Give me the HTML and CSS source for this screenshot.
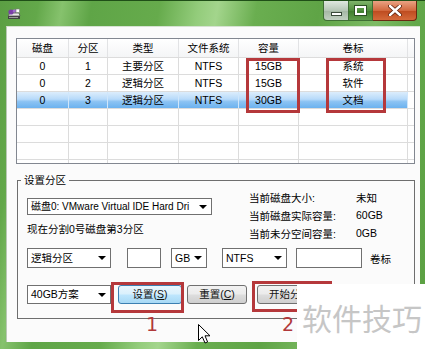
FILE: index.html
```html
<!DOCTYPE html>
<html>
<head>
<meta charset="utf-8">
<link rel="stylesheet" href="styles.css">
</head>
<body>
<div class="window">
  <div class="titlebar">
    <svg class="app-icon" width="14" height="12" viewBox="0 0 14 12">
      <path d="M1 8 L3 5 L12 5 L13 8 Z" fill="#e8e8e8" stroke="#555" stroke-width="0.8"/>
      <rect x="1" y="8" width="12" height="3" fill="#444"/>
      <rect x="2" y="9" width="9" height="1" fill="#9a9a9a"/>
      <circle cx="4" cy="4" r="2.6" fill="#7a3fa8"/>
      <circle cx="7.5" cy="3" r="1.8" fill="#a26ad0"/>
      <rect x="9" y="1" width="3.5" height="3.5" fill="#ffffff" stroke="#777" stroke-width="0.6"/>
    </svg>
    <div class="caption-buttons">
      <div class="cap cap-min"><span class="dash"></span></div>
      <div class="cap cap-max"><span class="square"></span></div>
      <div class="cap cap-close">
        <svg width="14" height="11" viewBox="0 0 14 11"><path d="M2 1 L12 10 M12 1 L2 10" stroke="#5a1e08" stroke-width="4" stroke-linecap="round"/><path d="M2 1 L12 10 M12 1 L2 10" stroke="#ffffff" stroke-width="2.4" stroke-linecap="round"/></svg>
      </div>
    </div>
  </div>

  <div class="client">
    <div class="grid">
      <div class="row head">
        <div class="cell">磁盘</div><div class="cell">分区</div><div class="cell">类型</div><div class="cell">文件系统</div><div class="cell">容量</div><div class="cell">卷标</div><div class="cell"></div>
      </div>
      <div class="row">
        <div class="cell">0</div><div class="cell">1</div><div class="cell">主要分区</div><div class="cell">NTFS</div><div class="cell">15GB</div><div class="cell">系统</div><div class="cell"></div>
      </div>
      <div class="row">
        <div class="cell">0</div><div class="cell">2</div><div class="cell">逻辑分区</div><div class="cell">NTFS</div><div class="cell">15GB</div><div class="cell">软件</div><div class="cell"></div>
      </div>
      <div class="row selected">
        <div class="cell">0</div><div class="cell">3</div><div class="cell">逻辑分区</div><div class="cell">NTFS</div><div class="cell">30GB</div><div class="cell">文档</div><div class="cell"></div>
      </div>
      <div class="row"><div class="cell"></div><div class="cell"></div><div class="cell"></div><div class="cell"></div><div class="cell"></div><div class="cell"></div><div class="cell"></div></div>
      <div class="row"><div class="cell"></div><div class="cell"></div><div class="cell"></div><div class="cell"></div><div class="cell"></div><div class="cell"></div><div class="cell"></div></div>
      <div class="row"><div class="cell"></div><div class="cell"></div><div class="cell"></div><div class="cell"></div><div class="cell"></div><div class="cell"></div><div class="cell"></div></div>
      <div class="row"><div class="cell"></div><div class="cell"></div><div class="cell"></div><div class="cell"></div><div class="cell"></div><div class="cell"></div><div class="cell"></div></div>
    </div>

    <div class="group">
      <span class="group-label">设置分区</span>
      <div class="top-area">
        <div class="left-col">
          <div class="combo combo-disk">磁盘0: VMware Virtual IDE Hard Dri</div>
          <div class="info">现在分割0号磁盘第3分区</div>
        </div>
        <div class="stats">
          <span>当前磁盘大小:</span><span>未知</span>
          <span>当前磁盘实际容量:</span><span>60GB</span>
          <span>当前未分空间容量:</span><span>0GB</span>
        </div>
      </div>
      <div class="row3">
        <div class="combo w84">逻辑分区</div>
        <div class="textbox w34"></div>
        <div class="combo w36">GB</div>
        <div class="combo w65">NTFS</div>
        <div class="textbox w66"></div>
        <span class="vol-label">卷标</span>
      </div>
      <div class="row4">
        <div class="combo w84 h19">40GB方案</div>
        <div class="btn btn-primary">设置(<u>S</u>)</div>
        <div class="btn btn-reset">重置(<u>C</u>)</div>
        <div class="btn btn-start">开始分区</div>
      </div>
    </div>
  </div>

  <div class="mark mark-size"></div>
  <div class="mark mark-label"></div>
  <div class="mark mark-set"></div>
  <div class="mark mark-start"></div>
  <span class="num num-1">1</span>
  <span class="num num-2">2</span>
  <svg class="cursor" width="14" height="21" viewBox="0 0 14 21">
    <path d="M0.5 0.5 L0.5 16.5 L4.3 12.8 L7 19 L9.6 17.9 L7 11.8 L12 11.8 Z" fill="#ffffff" stroke="#000" stroke-width="1" stroke-linejoin="miter"/>
  </svg>
  <div class="watermark">软件技巧</div>
</div>
</body>
</html>
```

FILE: styles.css
```css
* { box-sizing: border-box; }

body {
  margin: 0;
  width: 425px;
  height: 349px;
  overflow: hidden;
  font-family: "Liberation Sans", "Noto Sans CJK SC", sans-serif;
  font-size: 10.5px;
  color: #000;
}

.window {
  position: relative;
  width: 425px;
  height: 349px;
  overflow: hidden;
  display: flex;
  flex-direction: column;
  background:
    linear-gradient(100deg,
      #5b9e43 0%, #63a84a 8%, #86c26d 13%, #5fa547 19%,
      #66ab4c 33%, #93cc7b 41%, #a3d58c 45%, #6aae50 53%,
      #5fa446 66%, #7dbb64 78%, #63a84a 86%, #5a9f42 100%);
}

.titlebar {
  flex: none;
  height: 26px;
  display: flex;
  justify-content: space-between;
  align-items: flex-start;
  border-top: 1px solid #1f4f17;
}

.app-icon {
  margin: 7px 0 0 7px;
}

.caption-buttons {
  display: flex;
  margin-right: 8px;
  height: 20px;
}

.cap {
  height: 20px;
  display: flex;
  align-items: center;
  justify-content: center;
  border: 1px solid #3f6f34;
  border-top: none;
}

.cap-min {
  width: 26px;
  border-bottom-left-radius: 4px;
  background: linear-gradient(#dfe8df, #b6c6b6 50%, #a3b6a3 51%, #c2d0c2);
  align-items: flex-end;
  padding-bottom: 4px;
}

.dash {
  width: 11px;
  height: 4px;
  background: #ffffff;
  border: 1px solid #3a4a3a;
}

.cap-max {
  width: 24px;
  border-left: none;
  background: linear-gradient(#7fb56a, #4f8d3c 50%, #3f7d2e 51%, #5f9b4a);
}

.square {
  width: 11px;
  height: 9px;
  border: 2px solid #ffffff;
  box-shadow: 0 0 0 1px #2c4f22;
}

.cap-close {
  width: 44px;
  border-left: none;
  border-bottom-right-radius: 4px;
  border-color: #6a2a12;
  background: linear-gradient(#e9a283, #d2693f 50%, #bd4a1f 51%, #d46a3a);
}

.client {
  flex: none;
  height: 316px;
  margin: 0 5px 0 6px;
  background: #fbfbfb;
  border-left: 1px solid #b9c8b5;
  border-top: 1px solid #d6e2d2;
  padding: 11px 0 0 9px;
}

.grid {
  width: 399px;
  height: 126px;
  border: 1px solid #828790;
  background: #fff;
  overflow: hidden;
}

.row {
  display: grid;
  grid-template-columns: 52px 39px 71px 60px 60px 109px 6px;
  height: 17px;
  border-bottom: 1px solid #dcdcdc;
}

.row.head {
  height: 19px;
  background: linear-gradient(#ffffff, #f4f5f6);
}

.cell {
  border-right: 1px solid #dcdcdc;
  text-align: center;
  line-height: 16px;
  white-space: nowrap;
  overflow: hidden;
}

.row.head .cell {
  line-height: 18px;
  border-right-color: #e2e3e5;
}

.cell:last-child {
  border-right: none;
}

.row.selected .cell:not(:last-child) {
  background: linear-gradient(#dcedfc, #b7dafa 45%, #8cc3f3 60%, #6cb2ef);
  border-right-color: #cfe6fb;
}

.group {
  position: relative;
  width: 398px;
  height: 139px;
  margin: 16px 0 0 1px;
  border: 1px solid #6e6e6e;
  padding: 7px 0 0 9px;
}

.group-label {
  position: absolute;
  left: 3px;
  top: -9px;
  padding: 0 3px;
  background: #fbfbfb;
  line-height: 16px;
}

.top-area {
  display: flex;
  height: 55px;
}

.left-col {
  width: 185px;
  flex: none;
  padding-top: 10px;
}

.combo {
  position: relative;
  flex: none;
  height: 17px;
  border: 1px solid #707070;
  background: #fff;
  padding-left: 3px;
  line-height: 15px;
  white-space: nowrap;
  overflow: hidden;
}

.combo::after {
  content: "";
  position: absolute;
  right: 4px;
  top: 6px;
  border-left: 4px solid transparent;
  border-right: 4px solid transparent;
  border-top: 4px solid #000;
}

.combo-disk {
  font-size: 10px;
}

.info {
  margin-top: 6px;
  line-height: 16px;
}

.stats {
  margin-left: 37px;
  display: grid;
  grid-template-columns: 107px auto;
  grid-auto-rows: 18px;
  align-items: center;
}

.row3 {
  display: flex;
  align-items: center;
  margin-top: 5px;
  height: 20px;
}

.row3 .combo, .row3 .textbox {
  height: 20px;
  line-height: 18px;
}

.row3 .combo::after { top: 7px; }

.textbox {
  flex: none;
  border: 1px solid #707070;
  background: #fff;
}

.w84 { width: 84px; }
.w34 { width: 34px; margin-left: 16px; }
.w36 { width: 36px; margin-left: 10px; }
.w65 { width: 65px; margin-left: 15px; }
.w66 { width: 66px; margin-left: 9px; }

.vol-label {
  margin-left: 8px;
}

.row4 {
  display: flex;
  align-items: center;
  margin-top: 17px;
  height: 19px;
}

.row4 .combo {
  height: 19px;
  line-height: 17px;
}

.row4 .combo::after { top: 7px; }

.btn {
  flex: none;
  height: 19px;
  border: 1px solid #707070;
  border-radius: 3px;
  text-align: center;
  line-height: 17px;
  background: linear-gradient(#f2f2f2, #ebebeb 48%, #dddddd 52%, #cfcfcf);
  color: #111;
  white-space: nowrap;
}

.btn-primary {
  width: 64px;
  margin-left: 7px;
  border-color: #3c7fb1;
  background: linear-gradient(#eaf6fd, #d9f0fc 48%, #bee6fd 52%, #a7d9f5);
}

.btn-reset {
  width: 60px;
  margin-left: 5px;
}

.btn-start {
  width: 66px;
  margin-left: 10px;
}

.mark {
  position: absolute;
  border: 3px solid #b5383b;
}

.mark-size { left: 246px; top: 58px; width: 54px; height: 55px; }
.mark-label { left: 326px; top: 58px; width: 60px; height: 55px; }
.mark-set { left: 111px; top: 282px; width: 73px; height: 31px; }
.mark-start { left: 252px; top: 281px; width: 80px; height: 31px; }

.num {
  position: absolute;
  font-family: "DejaVu Sans", sans-serif;
  font-size: 19px;
  line-height: 19px;
  color: #b0383a;
}

.num-1 { left: 146px; top: 315px; }
.num-2 { left: 282px; top: 315px; }

.cursor {
  position: absolute;
  left: 198px;
  top: 324px;
}

.watermark {
  position: absolute;
  left: 297px;
  top: 284px;
  width: 128px;
  height: 65px;
  background: #ffffff;
  padding: 15px 0 0 5px;
  font-family: "Noto Sans CJK SC", sans-serif;
  font-size: 30px;
  line-height: 36px;
  color: #c6c6c6;
  white-space: nowrap;
}
```
